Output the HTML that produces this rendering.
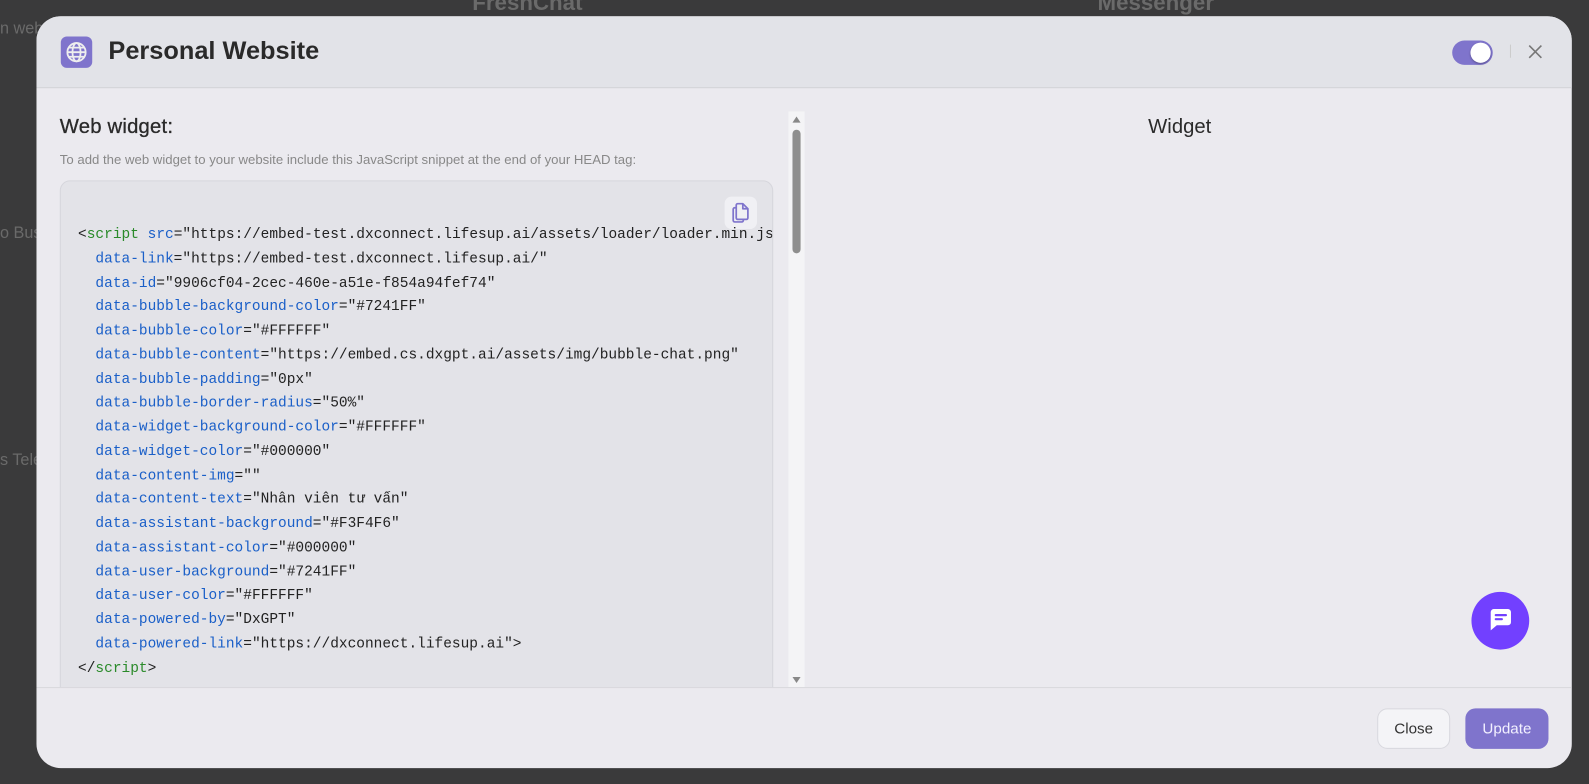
<!DOCTYPE html>
<html><head><meta charset="utf-8"><style>
*{box-sizing:border-box;margin:0;padding:0}
body{width:1589px;height:784px;overflow:hidden;background:#3a3a3b;font-family:"Liberation Sans",sans-serif;position:relative}
.wrap{position:absolute;left:0;top:0;width:1568px;height:774px;transform:scale(1.0134);transform-origin:0 0}
.bg{position:absolute;color:#6a6a6a;font-size:16px}
.modal{position:absolute;left:36px;top:16px;width:1515px;height:742px;background:#ebeaef;border-radius:24px;overflow:hidden}
.hdr{height:71px;background:#e2e3e8;border-bottom:1px solid #d3d3d8;position:relative}
.ico{position:absolute;left:24px;top:20px;width:31px;height:31px;border-radius:6px;background:#7f74cc}
.title{position:absolute;left:71px;top:20px;font-size:25px;font-weight:bold;color:#2a2a2a}
.tog{position:absolute;left:1397px;top:24px;width:40px;height:24px;border-radius:12px;background:#7f74cc}
.tog i{position:absolute;right:2px;top:2px;width:20px;height:20px;border-radius:50%;background:#fff;box-shadow:0 1px 2px rgba(0,0,0,.3)}
.sep{position:absolute;left:1454px;top:28px;width:1px;height:13px;background:#ccc}
.x{position:absolute;left:1471px;top:27px}
h2{position:absolute;left:23px;top:98px;font-size:20px;font-weight:normal;color:#2a2a2a;letter-spacing:.2px;-webkit-text-stroke:.3px #2a2a2a}
.sub{position:absolute;left:23px;top:134px;font-size:13px;color:#888}
.clip{position:absolute;left:0;top:72px;width:100%;height:590px;overflow:hidden}
.code{position:absolute;left:23px;top:90px;width:704px;height:560px;background:#e3e3e8;border:1px solid #d6d6dc;border-radius:10px;overflow:hidden}
pre{position:absolute;left:17px;top:42px;font-family:"Liberation Mono","DejaVu Sans Mono",monospace;font-size:14.3px;line-height:23.75px;color:#222;white-space:pre}
.k{color:#2a8a2a}.a{color:#1a5fc8}
.copy{position:absolute;left:655px;top:15px;width:32px;height:32px;background:#f0f0f4;border-radius:7px}
.sb{position:absolute;left:742px;top:94px;width:16px;height:568px;background:#f4f4f6}
.sb .th{position:absolute;left:4px;top:18px;width:8px;height:122px;border-radius:4px;background:#8e8e8e}
.wt{position:absolute;left:1097px;top:98px;font-size:20px;color:#2a2a2a}
.bub{position:absolute;left:1416px;top:568px;width:57px;height:57px;border-radius:50%;background:#7240ff}
.ftr{position:absolute;left:0;top:662px;width:100%;border-top:1px solid #d8d8dc}
.btn{position:absolute;top:683px;height:40px;border-radius:10px;font-size:15px;display:flex;align-items:center;justify-content:center}
.c{left:1323px;width:72px;background:#f4f4f7;border:1px solid #d8d8de;color:#333}
.u{left:1410px;width:82px;background:#7f74cc;color:#f2f0ff}
</style></head><body>
<div class="wrap">
<div class="bg" style="left:0;top:20px">n web</div>
<div class="bg" style="left:0;top:222px">o Bus</div>
<div class="bg" style="left:0;top:446px">s Teleg</div>
<div class="bg" style="left:466px;top:-10px;font-size:22px;font-weight:bold">FreshChat</div>
<div class="bg" style="left:1083px;top:-10px;font-size:22px;font-weight:bold">Messenger</div>
<div class="modal">
<div class="hdr">
<div class="ico"><svg width="31" height="31" viewBox="0 0 31 31" fill="none" stroke="#eee" stroke-width="1.8"><circle cx="15.5" cy="15.5" r="9"/><ellipse cx="15.5" cy="15.5" rx="4" ry="9"/><path d="M6.5 15.5h18M8 11h15M8 20h15"/></svg></div>
<div class="title">Personal Website</div>
<div class="tog"><i></i></div><div class="sep"></div>
<svg class="x" width="16" height="16" viewBox="0 0 16 16" stroke="#777" stroke-width="1.6"><path d="M2 2l12 12M14 2L2 14"/></svg>
</div>
<h2>Web widget:</h2>
<div class="sub">To add the web widget to your website include this JavaScript snippet at the end of your HEAD tag:</div>
<div class="clip">
<div class="code">
<div class="copy"><svg width="32" height="32" viewBox="0 0 32 32" fill="none" stroke="#7f74cc" stroke-width="1.7" stroke-linejoin="round"><path d="M13 7h5l5 5v9a1.5 1.5 0 0 1-1.5 1.5H13a1.5 1.5 0 0 1-1.5-1.5V8.5A1.5 1.5 0 0 1 13 7z"/><path d="M18 7v5h5"/><path d="M11.5 11H10a1.5 1.5 0 0 0-1.5 1.5v11A1.5 1.5 0 0 0 10 25h7a1.5 1.5 0 0 0 1.5-1.5v-1"/></svg></div>
<pre>&lt;<span class="k">script</span> <span class="a">src</span>="https://embed-test.dxconnect.lifesup.ai/assets/loader/loader.min.js"
  <span class="a">data-link</span>="https://embed-test.dxconnect.lifesup.ai/"
  <span class="a">data-id</span>="9906cf04-2cec-460e-a51e-f854a94fef74"
  <span class="a">data-bubble-background-color</span>="#7241FF"
  <span class="a">data-bubble-color</span>="#FFFFFF"
  <span class="a">data-bubble-content</span>="https://embed.cs.dxgpt.ai/assets/img/bubble-chat.png"
  <span class="a">data-bubble-padding</span>="0px"
  <span class="a">data-bubble-border-radius</span>="50%"
  <span class="a">data-widget-background-color</span>="#FFFFFF"
  <span class="a">data-widget-color</span>="#000000"
  <span class="a">data-content-img</span>=""
  <span class="a">data-content-text</span>="Nhân viên tư vấn"
  <span class="a">data-assistant-background</span>="#F3F4F6"
  <span class="a">data-assistant-color</span>="#000000"
  <span class="a">data-user-background</span>="#7241FF"
  <span class="a">data-user-color</span>="#FFFFFF"
  <span class="a">data-powered-by</span>="DxGPT"
  <span class="a">data-powered-link</span>="https://dxconnect.lifesup.ai"&gt;
&lt;/<span class="k">script</span>&gt;</pre>
</div>
</div>
<div class="sb"><svg width="16" height="568" style="position:absolute;left:0;top:0"><path d="M4 11l4-6 4 6z" fill="#888"/><path d="M4 558l4 6 4-6z" fill="#888"/></svg><div class="th"></div></div>
<div class="wt">Widget</div>
<div class="bub"><svg width="57" height="57" viewBox="0 0 57 57"><path d="M19 20a3 3 0 0 1 3-3h14a3 3 0 0 1 3 3v10a3 3 0 0 1-3 3H25l-6 5z" fill="#fff"/><path d="M24 23h10M24 27h6" stroke="#7240ff" stroke-width="2.2" stroke-linecap="round"/></svg></div>
<div class="ftr"></div>
<div class="btn c">Close</div>
<div class="btn u">Update</div>
</div>
</div>
</body></html>
